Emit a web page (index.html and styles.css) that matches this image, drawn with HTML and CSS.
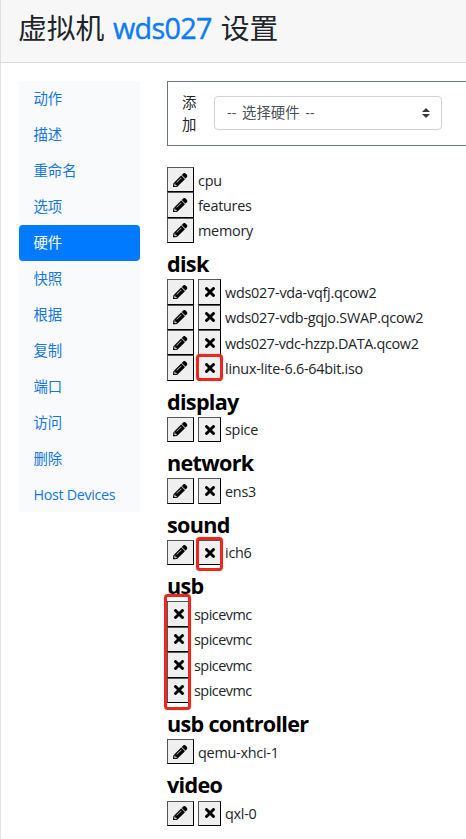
FILE: index.html
```
<!DOCTYPE html>
<html lang="zh">
<head>
<meta charset="utf-8">
<title>虚拟机 wds027 设置</title>
<link rel="stylesheet" href="styles.css">
</head>
<body>
<svg width="0" height="0" class="defs">
  <symbol id="pencil" viewBox="0 0 512 512"><path d="M497.900 142.100l-46.100 46.100c-4.700 4.700-12.300 4.700-17 0l-111-111c-4.700-4.700-4.700-12.300 0-17l46.100-46.100c18.700-18.700 49.100-18.700 67.900 0l60.100 60.100c18.800 18.700 18.800 49.100 0 67.900zM284.200 99.800L21.600 362.400.4 483.900c-2.900 16.400 11.400 30.600 27.800 27.800l121.500-21.300 262.600-262.600c4.700-4.700 4.700-12.300 0-17l-111-111c-4.800-4.700-12.400-4.700-17.100 0zM124.100 339.900c-5.500-5.500-5.500-14.300 0-19.800l154-154c5.500-5.500 14.300-5.500 19.800 0s5.500 14.300 0 19.800l-154 154c-5.500 5.500-14.300 5.500-19.800 0zM88 424h48v36.300l-64.500 11.300-31.100-31.100L51.700 376H88v48z"/></symbol>
  <symbol id="times" viewBox="0 80 352 352"><path d="M242.720 256l100.070-100.070c12.280-12.280 12.280-32.190 0-44.480l-22.240-22.240c-12.280-12.280-32.190-12.280-44.480 0L176 189.280 75.930 89.210c-12.280-12.280-32.190-12.280-44.480 0L9.210 111.450c-12.280 12.280-12.280 32.190 0 44.480L109.280 256 9.210 356.070c-12.280 12.280-12.280 32.190 0 44.480l22.240 22.240c12.280 12.280 32.200 12.280 44.480 0L176 322.720l100.070 100.070c12.280 12.280 32.200 12.280 44.480 0l22.240-22.240c12.280-12.280 12.280-32.190 0-44.480L242.720 256z"/></symbol>
</svg>
<div class="panel">
  <header class="header"><h1>虚拟机 <a class="vm">wds027</a> 设置</h1></header>
  <div class="body">
    <nav class="nav">
      <a>动作</a><a>描述</a><a>重命名</a><a>选项</a><a class="active">硬件</a><a>快照</a><a>根据</a><a>复制</a><a>端口</a><a>访问</a><a>删除</a><a class="latin">Host Devices</a>
    </nav>
    <main class="main">
      <div class="add">
        <label>添加</label>
        <div class="select"><span>-- 选择硬件 --</span><svg width="8" height="10" viewBox="0 0 4 5"><path fill="#343a40" d="M2 0L0 2h4zm0 5L0 3h4z"/></svg></div>
      </div>
      <div class="row"><button class="edit"><svg><use href="#pencil"/></svg></button><span>cpu</span></div>
      <div class="row"><button class="edit"><svg><use href="#pencil"/></svg></button><span>features</span></div>
      <div class="row"><button class="edit"><svg><use href="#pencil"/></svg></button><span>memory</span></div>
      <h2>disk</h2>
      <div class="row"><button class="edit"><svg><use href="#pencil"/></svg></button><button class="del"><svg><use href="#times"/></svg></button><span>wds027-vda-vqfj.qcow2</span></div>
      <div class="row"><button class="edit"><svg><use href="#pencil"/></svg></button><button class="del"><svg><use href="#times"/></svg></button><span>wds027-vdb-gqjo.SWAP.qcow2</span></div>
      <div class="row"><button class="edit"><svg><use href="#pencil"/></svg></button><button class="del"><svg><use href="#times"/></svg></button><span class="tight">wds027-vdc-hzzp.DATA.qcow2</span></div>
      <div class="row"><button class="edit"><svg><use href="#pencil"/></svg></button><button class="del"><svg><use href="#times"/></svg><i class="mark mark-iso"></i></button><span>linux-lite-6.6-64bit.iso</span></div>
      <h2>display</h2>
      <div class="row"><button class="edit"><svg><use href="#pencil"/></svg></button><button class="del"><svg><use href="#times"/></svg></button><span>spice</span></div>
      <h2>network</h2>
      <div class="row"><button class="edit"><svg><use href="#pencil"/></svg></button><button class="del"><svg><use href="#times"/></svg></button><span>ens3</span></div>
      <h2>sound</h2>
      <div class="row"><button class="edit"><svg><use href="#pencil"/></svg></button><button class="del"><svg><use href="#times"/></svg><i class="mark mark-sound"></i></button><span>ich6</span></div>
      <h2>usb</h2>
      <div class="group">
        <div class="row"><button class="del"><svg><use href="#times"/></svg></button><span>spicevmc</span></div>
        <div class="row"><button class="del"><svg><use href="#times"/></svg></button><span>spicevmc</span></div>
        <div class="row"><button class="del"><svg><use href="#times"/></svg></button><span>spicevmc</span></div>
        <div class="row"><button class="del"><svg><use href="#times"/></svg></button><span>spicevmc</span></div>
        <i class="mark mark-usb"></i>
      </div>
      <h2>usb controller</h2>
      <div class="row"><button class="edit"><svg><use href="#pencil"/></svg></button><span>qemu-xhci-1</span></div>
      <h2>video</h2>
      <div class="row"><button class="edit"><svg><use href="#pencil"/></svg></button><button class="del"><svg><use href="#times"/></svg></button><span>qxl-0</span></div>
    </main>
  </div>
</div>
</body>
</html>
```
FILE: styles.css
```
* { box-sizing: border-box; }
body {
  margin: 0;
  overflow: hidden;
  background: #fff;
  color: #212529;
  font: 14.4px/21.6px "Open Sans", "Noto Sans CJK SC", sans-serif;
}
.defs { position: absolute; }
.panel { height: 839px; border-left: 1px solid #dfdfdf; overflow: hidden; }
.header {
  height: 63px;
  padding: 11px 0 0 17px;
  background: #f7f7f7;
  border-bottom: 1px solid #d9d9d9;
}
h1 { margin: 0; font-size: 28.8px; font-weight: 400; line-height: 34px; white-space: nowrap; }
.vm { color: #0f7bf5; letter-spacing: -0.7px; margin: 0 1.5px 0 1px; -webkit-text-stroke: 0.4px #0f7bf5; }
.body { display: flex; padding: 18px 0 0 18px; }
.nav { flex: none; width: 121px; height: 431px; background: #f8fafc; }
.nav a {
  display: block;
  height: 36px;
  padding: 7px 0 0 14.4px;
  color: #1677e0;
  white-space: nowrap;
}
.nav .latin { letter-spacing: -0.35px; }
.nav .active { color: #fff; background: #007bff; border-radius: 4px; }
.main { flex: none; width: 310px; margin-left: 27px; }
.add {
  display: flex;
  height: 65px;
  margin-bottom: 21px;
  padding: 14px 0 0 14px;
  border: 1px solid #6c757d;
  border-right: 0;
}
.add label { width: 15px; margin: -4px 17px 0 0; overflow-wrap: anywhere; }
.select {
  display: flex;
  align-items: center;
  justify-content: space-between;
  width: 228px;
  height: 34px;
  padding: 0 11px 0 12px;
  border: 1px solid #ced4da;
  border-radius: 4px;
  color: #495057;
  word-spacing: 2px;
}
.row { display: flex; height: 25.4px; white-space: nowrap; }
.row button {
  position: relative;
  display: flex;
  align-items: center;
  justify-content: center;
  height: 25.4px;
  margin: 0 4px 0 0;
  padding: 0;
  background: #efefef;
  border: 1px solid;
  border-color: #555 #000 #000 #555;
}
.edit { width: 27px; }
.del { width: 23px; }
.edit svg { width: 14.4px; height: 14.4px; stroke: #000; stroke-width: 9px; }
.del svg { width: 10px; height: 10px; stroke: #000; stroke-width: 8px; }
.row span { padding-top: 2.5px; letter-spacing: -0.25px; }
.row .tight { letter-spacing: -0.35px; }
.group .row span { letter-spacing: -0.5px; }
h2 {
  height: 36.1px;
  margin: 0;
  padding-top: 8px;
  color: #000;
  font-size: 21.6px;
  font-weight: 700;
  line-height: 26px;
  letter-spacing: -0.7px;
}
.group { position: relative; }
.mark {
  position: absolute;
  border: 3px solid #e8291f;
  border-radius: 4px;
  box-shadow: 0 0 1px #f36a62;
}
.mark-iso { left: -3px; top: -2px; width: 27px; height: 27px; }
.mark-sound { left: -3px; top: -4px; width: 27px; height: 34px; }
.mark-usb { left: -3px; top: -7px; width: 27px; height: 116px; }
```
